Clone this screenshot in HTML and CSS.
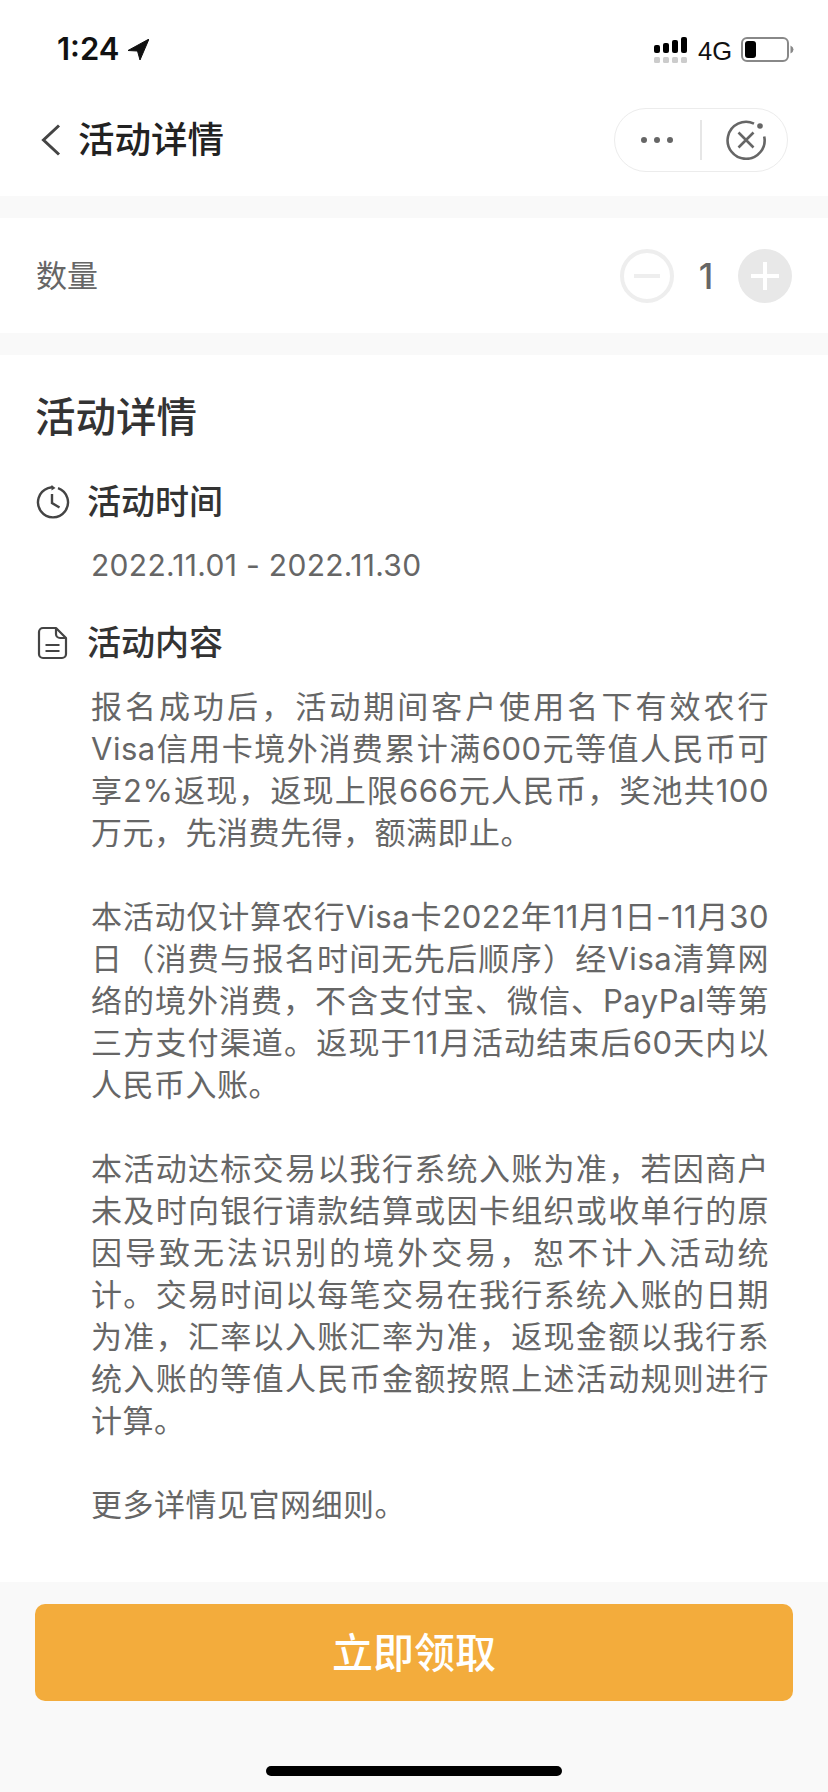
FILE: index.html
```html
<!DOCTYPE html>
<html lang="zh-CN">
<head>
<meta charset="utf-8">
<title>活动详情</title>
<link rel="stylesheet" href="styles.css">
</head>
<body>
<div class="page">
  <header class="top">
    <div class="status">
      <div class="status-left">
        <span class="time">1:24</span>
        <svg class="loc" viewBox="0 0 21 21"><path d="M21 0 L0 11.5 L9.5 12 L12 21 Z" fill="#111" stroke="#111" stroke-width="1" stroke-linejoin="round"/></svg>
      </div>
      <div class="status-right">
        <svg class="signal" viewBox="0 0 33 26">
          <rect x="0" y="8" width="6" height="8" rx="2" fill="#000"/><rect x="9" y="6" width="6" height="10" rx="2" fill="#000"/><rect x="18" y="3" width="6" height="13" rx="2" fill="#000"/><rect x="27" y="0" width="6" height="16" rx="2" fill="#000"/>
          <rect x="0" y="20" width="6" height="6" rx="1.5" fill="#ccc"/><rect x="9" y="20" width="6" height="6" rx="1.5" fill="#ccc"/><rect x="18" y="20" width="6" height="6" rx="1.5" fill="#ccc"/><rect x="27" y="20" width="6" height="6" rx="1.5" fill="#ccc"/>
        </svg>
        <span class="net">4G</span>
        <svg class="battery" viewBox="0 0 53 25">
          <rect x="1" y="1" width="46" height="23" rx="5" fill="none" stroke="#888" stroke-width="2"/>
          <rect x="4" y="4" width="11" height="17" rx="3" fill="#000"/>
          <path d="M49.5 8.5 Q52.5 10 52.5 12.5 Q52.5 15 49.5 16.5 Z" fill="#888"/>
        </svg>
      </div>
    </div>
    <nav class="nav">
      <svg class="back" viewBox="0 0 20 32"><path d="M18 1.5 L2.5 16 L18 30.5" fill="none" stroke="#444" stroke-width="3"/></svg>
      <h1 class="nav-title">活动详情</h1>
      <div class="capsule">
        <div class="dots"><i></i><i></i><i></i></div>
        <span class="sep"></span>
        <svg class="close" viewBox="0 0 40 40">
          <path d="M28 3.600 A18.500 18.500 0 1 0 38.200 16.500" fill="none" stroke="#666" stroke-width="2.600"/>
          <circle cx="34" cy="6" r="2.800" fill="#666"/>
          <path d="M12.500 12.500 L27.500 27.500 M27.500 12.500 L12.500 27.500" stroke="#666" stroke-width="2.600" fill="none"/>
        </svg>
      </div>
    </nav>
  </header>

  <section class="qty">
    <span class="qty-label">数量</span>
    <div class="stepper">
      <span class="btn minus"></span>
      <span class="num">1</span>
      <span class="btn plus"></span>
    </div>
  </section>

  <section class="detail">
    <h2 class="detail-title">活动详情</h2>
    <div class="head first">
      <svg class="ic" viewBox="0 0 34 34"><path d="M22 3.200 A15 15 0 1 1 12 3.200 L17 2" fill="none" stroke="#444" stroke-width="2.400"/><path d="M15.500 0 L19.500 3 L15.500 5.500" fill="#444"/><path d="M16 9 V18 L23.500 22.500" fill="none" stroke="#444" stroke-width="2.400"/></svg>
      <h3 class="head-title">活动时间</h3>
    </div>
    <div class="date">2022.11.01 - 2022.11.30</div>
    <div class="head second">
      <svg class="ic" viewBox="0 0 34 34"><path d="M20 2 H7 A4 4 0 0 0 3 6 V28 A4 4 0 0 0 7 32 H26 A4 4 0 0 0 30 28 V12 Z M20 2 V8 A4 4 0 0 0 24 12 H30" fill="none" stroke="#444" stroke-width="2.200" stroke-linejoin="round"/><path d="M9.500 19 H23.500 M9.500 25 H23.500" stroke="#444" stroke-width="2.200" fill="none"/></svg>
      <h3 class="head-title">活动内容</h3>
    </div>
    <div class="content">
      <p>
        <span class="ln">报名成功后，活动期间客户使用名下有效农行</span>
        <span class="ln">Visa信用卡境外消费累计满600元等值人民币可</span>
        <span class="ln">享2%返现，返现上限666元人民币，奖池共100</span>
        <span class="end">万元，先消费先得，额满即止。</span>
      </p>
      <p>
        <span class="ln">本活动仅计算农行Visa卡2022年11月1日-11月30</span>
        <span class="ln">日（消费与报名时间无先后顺序）经Visa清算网</span>
        <span class="ln">络的境外消费，不含支付宝、微信、PayPal等第</span>
        <span class="ln">三方支付渠道。返现于11月活动结束后60天内以</span>
        <span class="end">人民币入账。</span>
      </p>
      <p>
        <span class="ln">本活动达标交易以我行系统入账为准，若因商户</span>
        <span class="ln">未及时向银行请款结算或因卡组织或收单行的原</span>
        <span class="ln">因导致无法识别的境外交易，恕不计入活动统</span>
        <span class="ln">计。交易时间以每笔交易在我行系统入账的日期</span>
        <span class="ln">为准，汇率以入账汇率为准，返现金额以我行系</span>
        <span class="ln">统入账的等值人民币金额按照上述活动规则进行</span>
        <span class="end">计算。</span>
      </p>
      <p><span class="end">更多详情见官网细则。</span></p>
    </div>
  </section>

  <footer class="foot">
    <button class="cta">立即领取</button>
    <div class="home"></div>
  </footer>
</div>
</body>
</html>
```
FILE: styles.css
```css
* { box-sizing: border-box; }
html, body { margin: 0; padding: 0; }
body {
  font-family: "Inter", "Noto Sans CJK SC", sans-serif;
  background: #f9f9f9;
}
.page {
  width: 828px;
  height: 1792px;
  display: flex;
  flex-direction: column;
  overflow: hidden;
  background: #f9f9f9;
}
h1, h2, h3, p { margin: 0; font-weight: 500; }

.top { height: 196px; background: #fff; display: flex; flex-direction: column; }
.status {
  height: 76px;
  padding: 29px 34px 0 57px;
  display: flex;
  justify-content: space-between;
  align-items: flex-start;
}
.status-left { display: flex; align-items: center; gap: 9px; height: 40px; }
.time { font-size: 31px; font-weight: 600; line-height: 40px; color: #111; }
.loc { width: 21px; height: 21px; }
.status-right { display: flex; align-items: flex-start; }
.signal { width: 33px; height: 26px; margin-top: 8px; }
.net { font-family: "Liberation Sans", sans-serif; font-size: 25.5px; line-height: 30px; margin: 7px 0 0 11px; color: #111; width: 32px; }
.battery { width: 53px; height: 25px; margin: 8px 0 0 11px; }

.nav {
  flex: 1;
  display: flex;
  align-items: center;
  padding: 8px 40px 0 41px;
}
.back { width: 20px; height: 32px; }
.nav-title { font-size: 36.5px; line-height: 50px; margin-left: 17px; color: #222; }
.capsule {
  margin-left: auto;
  width: 174px;
  height: 64px;
  border: 1.5px solid #ececec;
  border-radius: 32px;
  display: flex;
  align-items: center;
  background: #fff;
}
.dots { display: flex; gap: 7px; margin-left: 26px; }
.dots i { width: 6px; height: 6px; border-radius: 50%; background: #666; display: block; }
.sep { width: 2px; height: 40px; background: #e6e6e6; margin-left: 27px; }
.close { width: 40px; height: 40px; margin-left: 24px; }

.qty {
  height: 115px;
  margin-top: 22px;
  background: #fff;
  display: flex;
  align-items: center;
  justify-content: space-between;
  padding: 0 36px;
}
.qty-label { font-size: 31px; color: #666; line-height: 42px; }
.stepper { display: flex; align-items: center; }
.btn { width: 54px; height: 54px; border-radius: 50%; position: relative; display: block; }
.minus { border: 4px solid #eee; }
.minus::before {
  content: "";
  position: absolute;
  left: 10px; right: 10px; top: 21px;
  height: 4px;
  background: #eee;
}
.plus { background: #e8e8e8; }
.plus::before, .plus::after {
  content: "";
  position: absolute;
  background: #fff;
}
.plus::before { left: 13px; right: 13px; top: 25px; height: 4px; }
.plus::after { top: 13px; bottom: 13px; left: 25px; width: 4px; }
.num { width: 64px; text-align: center; font-size: 35px; line-height: 44px; color: #666; font-weight: 500; }

.detail {
  height: 1227px;
  margin-top: 22px;
  background: #fff;
  padding: 36px 59px 0 36px;
}
.detail-title { font-size: 40.5px; line-height: 54px; color: #333; margin-left: -1px; }
.head { display: flex; align-items: center; height: 54px; }
.head.first { margin-top: 30px; }
.head.second { margin-top: 30px; }
.ic { width: 34px; height: 34px; }
.head-title { font-size: 34px; line-height: 54px; color: #333; margin-left: 17px; }
.date { margin: 15px 0 0 55px; font-size: 30px; letter-spacing: 0.3px; line-height: 42px; color: #666; }
.content { margin: 16px 0 0 55px; font-size: 31px; letter-spacing: 0.5px; line-height: 42px; color: #666; }
.content p { font-weight: 400; margin-bottom: 42px; }
.ln { display: block; text-align: justify; text-align-last: justify; }
.end { display: block; }

.foot {
  flex: 1;
  display: flex;
  flex-direction: column;
  align-items: center;
  padding: 22px 35px 0;
}
.cta {
  width: 100%;
  height: 97px;
  padding: 0 0 6px;
  border: 0;
  border-radius: 10px;
  background: #f3ac3c;
  color: #fff;
  font-family: inherit;
  font-size: 41px;
  font-weight: 500;
}
.home { width: 296px; height: 10px; border-radius: 5px; background: #000; margin-top: 65px; }
```
